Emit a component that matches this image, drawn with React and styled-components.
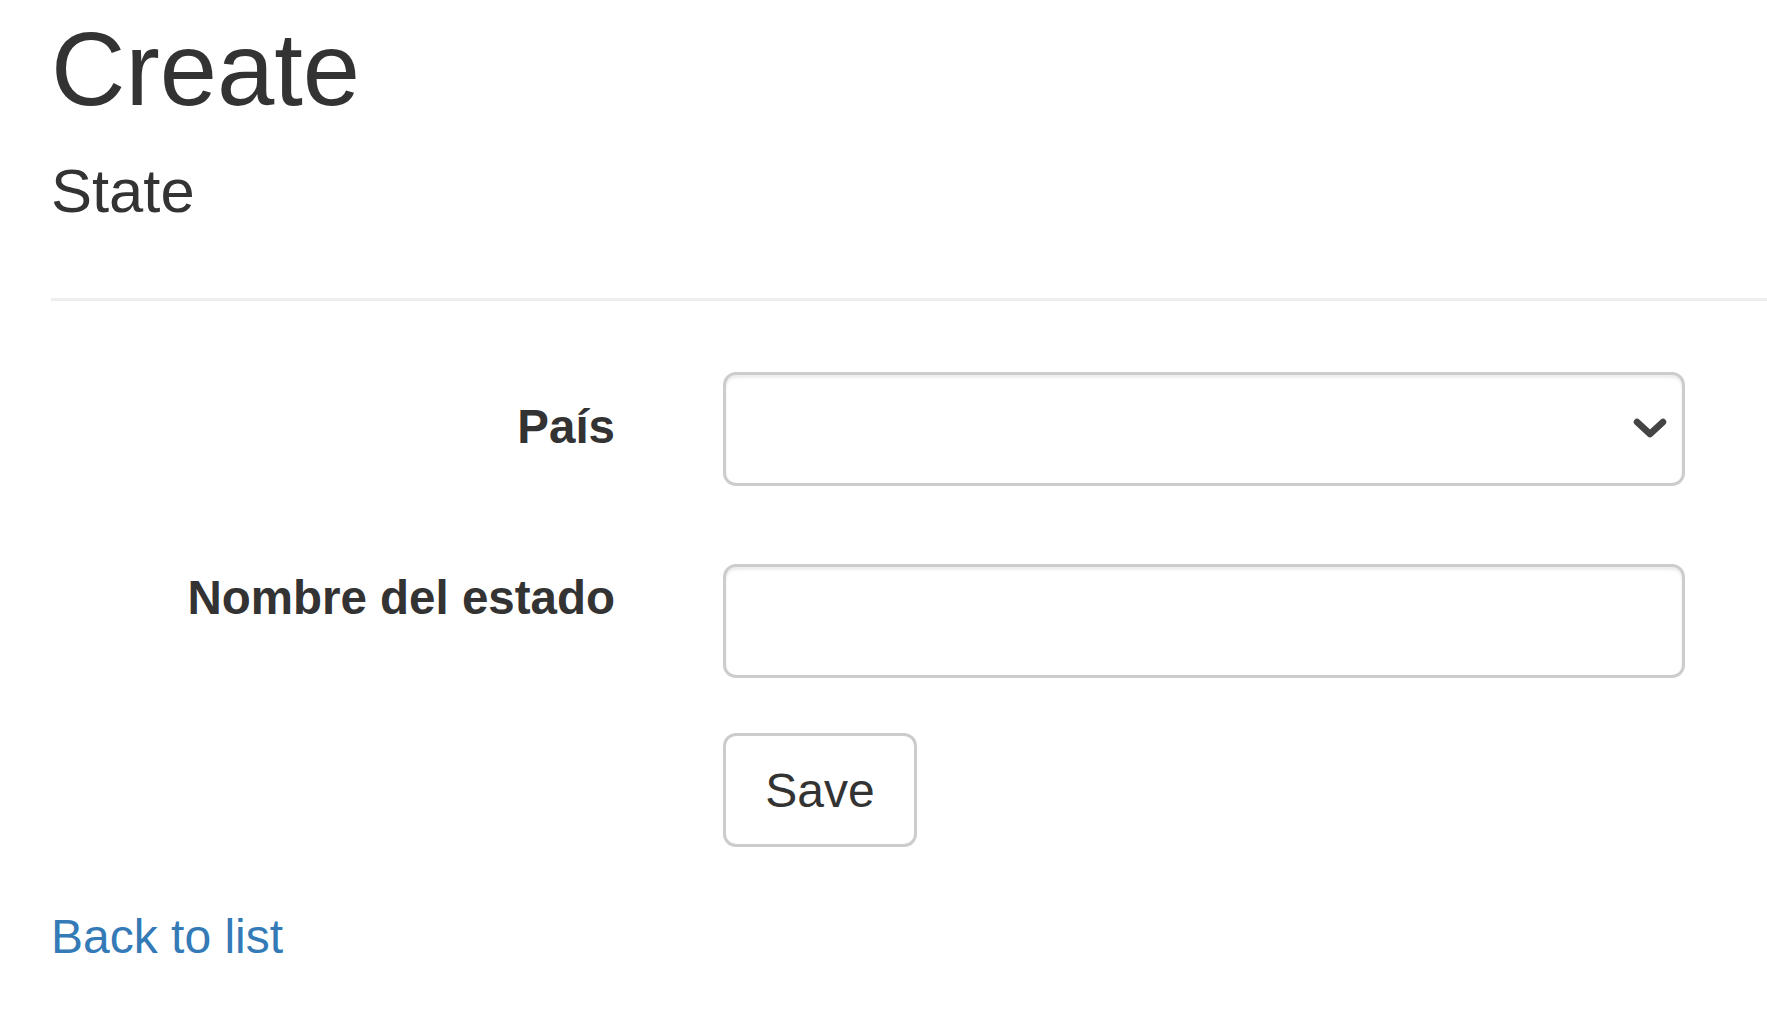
import React from "react";
import styled, { createGlobalStyle } from "styled-components";

const GlobalStyle = createGlobalStyle`
  html, body {
    margin: 0;
    padding: 0;
    background: #fff;
  }
  body {
    font-family: "Liberation Sans", Arial, sans-serif;
    color: #333;
  }
  * {
    box-sizing: border-box;
  }
`;

const Page = styled.div`
  padding: 15px 0 60px 51px;
`;

const Title = styled.h2`
  margin: 0;
  font-size: 103px;
  line-height: 110px;
  font-weight: 500;
  color: #333;
`;

const SubTitle = styled.h4`
  margin: 33px 0 0 0;
  font-size: 61.5px;
  line-height: 66px;
  font-weight: 500;
  color: #333;
`;

const Rule = styled.hr`
  margin: 74px 0 0 0;
  border: 0;
  border-top: 3px solid #eee;
  height: 0;
`;

const Form = styled.form`
  display: flex;
  flex-direction: column;
`;

const FormRow = styled.div`
  display: grid;
  grid-template-columns: 564px 962px;
  column-gap: 108px;
  align-items: start;
  margin-top: ${(props) => props.gap}px;
`;

const Label = styled.label`
  text-align: right;
  font-weight: 700;
  font-size: 47.5px;
  line-height: 67px;
  padding-top: ${(props) => props.offset || 0}px;
  color: #333;
`;

const Field = styled.div`
  position: relative;
  height: 114px;
  border: 3px solid #ccc;
  border-radius: 13px;
  background: #fff;
  box-shadow: inset 0 3px 3px rgba(0, 0, 0, 0.075);
`;

const Chevron = styled.svg`
  position: absolute;
  right: 15px;
  top: 50%;
  transform: translateY(-50%);
  width: 34px;
  height: 22px;
`;

const Button = styled.button`
  width: 194px;
  height: 114px;
  padding: 20px 0;
  text-align: center;
  font-family: "Liberation Sans", Arial, sans-serif;
  font-size: 48px;
  line-height: 67px;
  color: #333;
  background: #fff;
  border: 3px solid #ccc;
  border-radius: 13px;
  cursor: pointer;
`;

const Spacer = styled.div``;

const BackLink = styled.a`
  display: block;
  margin-top: 56px;
  font-size: 48px;
  line-height: 67px;
  color: #337ab7;
  text-decoration: none;
`;

function App() {
  return (
    <>
      <GlobalStyle />
      <Page>
        <Title>Create</Title>
        <SubTitle>State</SubTitle>
        <Rule />
        <Form onSubmit={(e) => e.preventDefault()}>
          <FormRow gap={71}>
            <Label offset={21}>País</Label>
            <Field>
              <Chevron viewBox="0 0 34 22">
                <polyline
                  points="4,4 17,16 30,4"
                  fill="none"
                  stroke="#444"
                  strokeWidth="6.5"
                  strokeLinecap="round"
                  strokeLinejoin="round"
                />
              </Chevron>
            </Field>
          </FormRow>
          <FormRow gap={78}>
            <Label>Nombre del estado</Label>
            <Field />
          </FormRow>
          <FormRow gap={55}>
            <Spacer />
            <div>
              <Button type="submit">Save</Button>
            </div>
          </FormRow>
        </Form>
        <BackLink href="#">Back to list</BackLink>
      </Page>
    </>
  );
}

export default App;
